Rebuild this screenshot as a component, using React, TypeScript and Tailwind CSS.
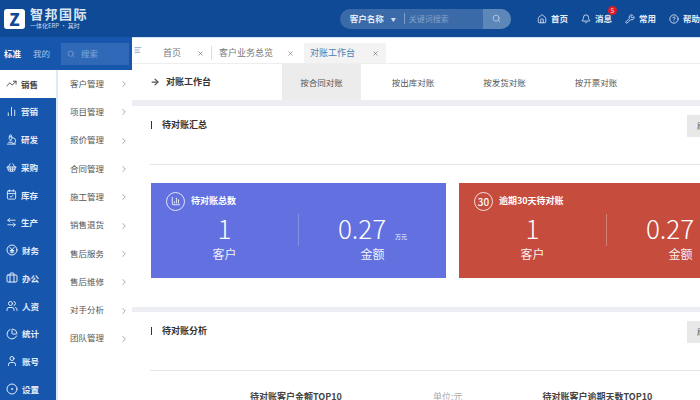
import { AlignLeft, ArrowRight, Bell, Briefcase, CalendarCheck, ChartColumn, ChartNoAxesColumn, ChartPie, ChevronRight, CircleDot, CircleHelp, Home, ArrowLeftRight, Microscope, Search, ShoppingBasket, TrendingUp, User, Users, Wrench, X } from "lucide-react"

function YenCircle({ className }: { className?: string }) {
  return (
    <svg viewBox="0 0 24 24" fill="none" stroke="currentColor" strokeWidth="2" strokeLinecap="round" strokeLinejoin="round" className={className}>
      <circle cx="12" cy="12" r="10" />
      <path d="M8 7l4 5 4-5M12 12v6M8.5 13h7M8.5 16h7" />
    </svg>
  )
}

const mainMenu = [
  { label: "销售", icon: TrendingUp },
  { label: "营销", icon: ChartNoAxesColumn },
  { label: "研发", icon: Microscope },
  { label: "采购", icon: ShoppingBasket },
  { label: "库存", icon: CalendarCheck },
  { label: "生产", icon: ArrowLeftRight },
  { label: "财务", icon: YenCircle },
  { label: "办公", icon: Briefcase },
  { label: "人资", icon: Users },
  { label: "统计", icon: ChartPie },
  { label: "账号", icon: User },
  { label: "设置", icon: CircleDot },
]

const subMenu = ["客户管理", "项目管理", "报价管理", "合同管理", "施工管理", "销售退货", "售后服务", "售后维修", "对手分析", "团队管理"]

function StatCard({ bg, badge, title, line }: { bg: string; badge: React.ReactNode; title: string; line: string }) {
  return (
    <div className={`w-[295px] h-[95px] shrink-0 pt-[8px] text-white ${bg}`}>
      <div className="flex items-center gap-[6px] pl-[15px] h-[20px]">
        {badge}
        <span className="text-[9px] font-bold">{title}</span>
      </div>
      <div className="flex items-start">
        <div className="w-[147px] text-center">
          <div className="text-[26px] leading-[30px] mt-[2px] font-light">1</div>
          <div className="text-[12px] leading-[16px] mt-[3px] opacity-90">客户</div>
        </div>
        <div className={`w-px h-[32px] mt-[3px] ${line}`} />
        <div className="flex-1 text-center">
          <div className="h-[30px] mt-[2px] flex items-baseline justify-center whitespace-nowrap">
            <span className="text-[26px] leading-[30px] font-light">0.27</span>
            <span className="text-[6px] leading-[8px] ml-[9px]">万元</span>
          </div>
          <div className="text-[12px] leading-[16px] mt-[3px] opacity-90">金额</div>
        </div>
      </div>
    </div>
  )
}

function SectionTitle({ title }: { title: string }) {
  return (
    <div className="flex items-start justify-between pl-[19px] pt-[9px] h-[58px] shrink-0">
      <div className="flex items-center gap-[10px] h-[20px] text-[9px] font-bold text-[#333333]">
        <span className="w-px h-[8px] bg-[#333333]" />
        {title}
      </div>
      <div className="w-[13px] h-[22px] bg-[#e8e8e8] text-[8px] leading-[22px] text-[#666666] pl-[10px] overflow-hidden">刷</div>
    </div>
  )
}

export default function App() {
  return (
    <div className="w-[700px] h-[400px] overflow-hidden flex flex-col bg-white font-['Noto_Sans_CJK_SC','Noto_Sans',sans-serif]">
      <header className="h-[37px] shrink-0 bg-[#0f4a97] flex items-center text-white">
        <div className="w-[132px] flex items-center pl-[4px] gap-[5px]">
          <div className="w-[21px] h-[20px] rounded-[3px] bg-white flex items-center justify-center text-[#0f4a97] text-[17px] font-black leading-none">Z</div>
          <div className="flex flex-col gap-[1px] mb-[1px]">
            <div className="text-[13px] leading-[14px] font-bold tracking-[1.5px] text-[#dbe6f3] whitespace-nowrap">智邦国际</div>
            <div className="text-[6px] leading-[7px] text-[#c8d8ec] whitespace-nowrap">一体化ERP · 其时</div>
          </div>
        </div>
        <div className="ml-[212px] w-[177px] h-[20px] rounded-full bg-[#3a6aa8] flex items-center overflow-hidden">
          <span className="pl-[10px] text-[8.5px] font-bold text-[#e4ebf5] whitespace-nowrap">客户名称</span>
          <span className="ml-[7px] text-[5px] text-[#d5e0ee]">▼</span>
          <span className="ml-[8px] w-px h-[11px] bg-[#7f9fca]" />
          <span className="pl-[4px] flex-1 text-[8px] text-[#82a1c9] whitespace-nowrap">关键词搜索</span>
          <div className="w-[28px] h-full bg-[#5d86b9] flex items-center justify-center">
            <Search className="w-[9px] h-[9px] text-[#c7d6e9]" />
          </div>
        </div>
        <nav className="flex items-center ml-[26px] gap-[13px] text-[8.5px] font-bold text-[#e4ebf5] whitespace-nowrap">
          <span className="flex items-center gap-[4px]"><Home className="w-[10px] h-[10px]" />首页</span>
          <span className="relative flex items-center gap-[4px]">
            <Bell className="w-[10px] h-[10px]" />消息
            <span className="absolute -top-[6px] right-[-5px] w-[9px] h-[9px] rounded-full bg-[#e01b24] text-[6px] leading-[9px] text-center font-normal">5</span>
          </span>
          <span className="flex items-center gap-[4px]"><Wrench className="w-[10px] h-[10px]" />常用</span>
          <span className="flex items-center gap-[4px]"><CircleHelp className="w-[10px] h-[10px]" />帮助</span>
        </nav>
      </header>
      <div className="flex flex-1 min-h-0">
        <aside className="w-[132px] shrink-0 flex flex-col">
          <div className="h-[33px] shrink-0 bg-[#1657ad] flex items-center text-[8.5px] text-white">
            <span className="w-[28px] pl-[4px] font-bold">标准</span>
            <span className="w-[28px] pl-[5px] text-[#a9c3e6]">我的</span>
            <div className="w-[68px] h-[22px] ml-[5px] bg-[#2f69b8] flex items-center pl-[6px] gap-[6px] text-[#86a8d9]">
              <Search className="w-[8px] h-[8px]" />搜索
            </div>
          </div>
          <div className="flex flex-1 min-h-0">
            <div className="w-[56px] shrink-0 bg-[#1657ad] flex flex-col">
              {mainMenu.map((m, i) => (
                <div
                  key={m.label}
                  className={`h-[27.75px] shrink-0 flex items-center pl-[6px] gap-[4px] text-[8.5px] font-bold ${i === 0 ? "bg-white text-[#444444]" : "text-[#e3ecf8]"}`}
                >
                  <m.icon className={i >= 6 ? "w-[12px] h-[12px]" : "w-[11px] h-[11px]"} />
                  {m.label}
                </div>
              ))}
            </div>
            <div className="flex-1 bg-white border-l-2 border-[#dcebfb] flex flex-col">
              {subMenu.map((s) => (
                <div key={s} className="h-[28.3px] shrink-0 flex items-center justify-between pl-[12px] pr-[3px] text-[8.5px] text-[#555555]">
                  <span className="mb-[2px]">{s}</span>
                  <ChevronRight className="w-[10px] h-[10px] text-[#999999]" />
                </div>
              ))}
            </div>
          </div>
        </aside>
        <main className="flex-1 min-w-0 flex flex-col overflow-hidden">
          <div className="h-[26px] shrink-0 pt-[5px] flex items-stretch border-t border-[#cfe2f7]">
            <div className="w-[25px] pl-[2px] pt-[3px]">
              <AlignLeft className="w-[8px] h-[8px] text-[#5b7fae]" />
            </div>
            <div className="w-[55px] flex items-center justify-between text-[9px] text-[#777777] pl-[6px] pr-[7px] border-r border-[#dddddd] my-[3px]">
              首页<X className="w-[7px] h-[7px] text-[#666666]" />
            </div>
            <div className="w-[92px] flex items-center justify-between text-[9px] text-[#777777] pl-[7px] pr-[10px] whitespace-nowrap">
              客户业务总览<X className="w-[7px] h-[7px] text-[#666666]" />
            </div>
            <div className="w-[82px] flex items-center justify-between text-[9px] text-[#4a7fb5] bg-[#f3f3f3] pl-[6px] pr-[7px] whitespace-nowrap">
              对账工作台<X className="w-[7px] h-[7px] text-[#666666]" />
            </div>
          </div>
          <div className="h-[37px] shrink-0 flex items-stretch border-t border-[#eeeeee]">
            <div className="w-[150px] flex items-center gap-[6px] pl-[18px] text-[9px] font-bold text-[#333333]">
              <ArrowRight className="w-[10px] h-[10px] text-[#555555]" strokeWidth={3} />
              对账工作台
            </div>
            <div className="flex gap-[12.5px] text-[8.5px] text-[#555555]">
              <div className="w-[79px] bg-[#ececec] flex items-center justify-center">按合同对账</div>
              <div className="w-[79px] flex items-center justify-center">按出库对账</div>
              <div className="w-[79px] flex items-center justify-center">按发货对账</div>
              <div className="w-[79px] flex items-center justify-center">按开票对账</div>
            </div>
          </div>
          <div className="h-[6px] shrink-0 bg-[#eceef3]" />
          <SectionTitle title="待对账汇总" />
          <div className="h-px shrink-0 ml-[18px] bg-[#e6e6e6]" />
          <div className="flex gap-[13px] pl-[19px] pt-[18px] shrink-0">
            <StatCard
              bg="bg-[#6270e0]"
              line="bg-[#8590e8]"
              title="待对账总数"
              badge={
                <span className="w-[19px] h-[19px] rounded-full border border-white/80 flex items-center justify-center">
                  <ChartColumn className="w-[10px] h-[10px]" />
                </span>
              }
            />
            <StatCard
              bg="bg-[#c64c3e]"
              line="bg-[#d67f73]"
              title="逾期30天待对账"
              badge={
                <span className="w-[19px] h-[19px] rounded-full border border-white/80 flex items-center justify-center text-[10px] font-medium">30</span>
              }
            />
          </div>
          <div className="h-[5px] shrink-0 mt-[29px] bg-[#eceef3]" />
          <SectionTitle title="待对账分析" />
          <div className="h-px shrink-0 ml-[18px] bg-[#e6e6e6]" />
          <div className="flex items-center text-[9px] font-bold text-[#444444] pt-[19px] whitespace-nowrap">
            <span className="ml-[118px]">待对账客户金额TOP10</span>
            <span className="ml-[91px] font-normal text-[#aaaaaa]">单位:元</span>
            <span className="ml-[80px]">待对账客户逾期天数TOP10</span>
          </div>
        </main>
      </div>
    </div>
  )
}
